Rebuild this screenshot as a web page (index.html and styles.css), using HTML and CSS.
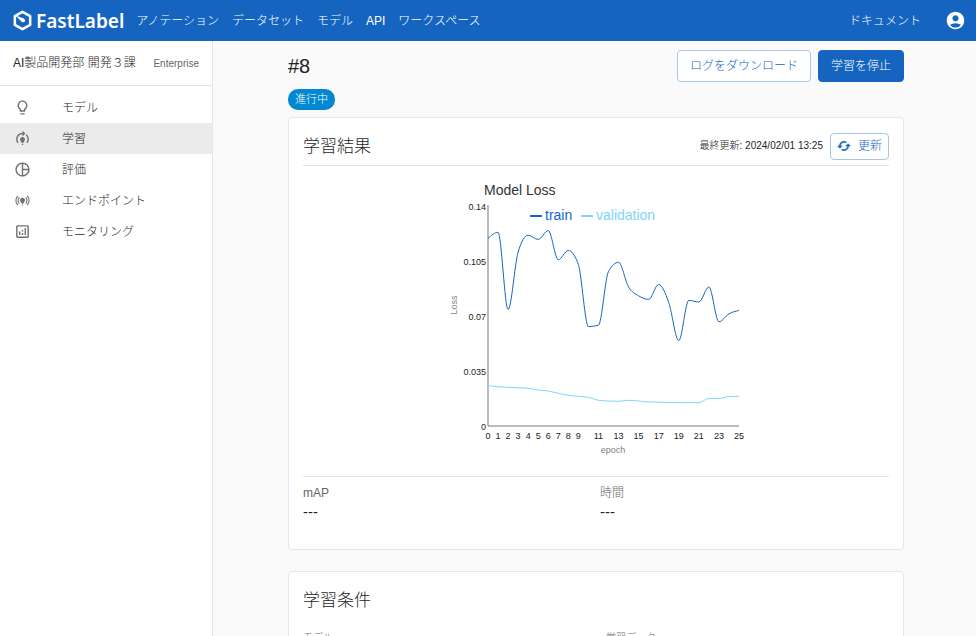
FILE: index.html
```html
<!DOCTYPE html>
<html lang="ja">
<head>
<meta charset="utf-8">
<meta name="viewport" content="width=device-width, initial-scale=1">
<title>FastLabel</title>
<link rel="stylesheet" href="styles.css">
</head>
<body>
<header class="topbar">
  <a class="brand" href="#">
    <svg class="brand-mark" viewBox="0 0 20 20" aria-hidden="true">
      <path class="brand-hex" d="M10 1.7 17.3 5.8V14.2L10 18.3 2.7 14.2V5.8Z"/>
      <path class="brand-needle" d="M3.2 5.2 10.8 7.8Q13.2 9 12.4 10.7 11.400 12.4 9.4 11.4Z"/>
    </svg>
    <span class="brand-name">FastLabel</span>
  </a>
  <nav class="topnav">
    <a href="#">アノテーション</a>
    <a href="#">データセット</a>
    <a href="#">モデル</a>
    <a href="#">API</a>
    <a href="#">ワークスペース</a>
  </nav>
  <a class="docs" href="#">ドキュメント</a>
  <button class="account" type="button" aria-label="アカウント">
    <svg viewBox="0 0 24 24" aria-hidden="true"><path d="M12 2C6.480 2 2 6.480 2 12s4.480 10 10 10 10-4.480 10-10S17.520 2 12 2zm0 4c1.930 0 3.500 1.570 3.500 3.500S13.930 13 12 13s-3.500-1.570-3.500-3.500S10.070 6 12 6zm0 14c-2.030 0-4.430-.82-6.140-2.880C7.550 15.800 9.680 15 12 15s4.450.8 6.140 2.120C16.430 19.180 14.030 20 12 20z"/></svg>
  </button>
</header>
<div class="shell">
  <aside class="sidebar">
    <div class="team"><span class="team-name">AI製品開発部 開発３課</span><span class="plan">Enterprise</span></div>
    <nav class="menu">
      <a href="#"><svg viewBox="0 0 24 24" aria-hidden="true"><path d="M9 21c0 .55.45 1 1 1h4c.55 0 1-.45 1-1v-1H9v1zm3-19C8.140 2 5 5.140 5 9c0 2.380 1.190 4.470 3 5.740V17c0 .55.45 1 1 1h6c.55 0 1-.45 1-1v-2.260c1.810-1.270 3-3.360 3-5.740 0-3.860-3.140-7-7-7zm2 11.700V16h-4v-2.300C8.480 12.630 7 11.530 7 9c0-2.760 2.240-5 5-5s5 2.240 5 5c0 2.490-1.510 3.650-3 4.700z"/></svg>モデル</a>
      <a class="current" href="#" aria-current="page"><svg viewBox="0 0 24 24" aria-hidden="true"><path d="M15.500 13.500c0 2-2.500 3.500-2.500 5h-2c0-1.500-2.500-3-2.500-5 0-1.930 1.570-3.500 3.500-3.500s3.500 1.570 3.500 3.500zm-2.500 6h-2V21h2v-1.500zm6-6.500c0 1.680-.59 3.210-1.580 4.420l1.420 1.420C20.180 17.270 21 15.230 21 13c0-2.740-1.230-5.190-3.160-6.840l-1.420 1.420C17.990 8.860 19 10.820 19 13zm-3-8-4-4v3c-4.970 0-9 4.030-9 9 0 2.230.82 4.270 2.160 5.840l1.420-1.420C5.590 16.210 5 14.680 5 13c0-3.860 3.140-7 7-7v3l4-4z"/></svg>学習</a>
      <a href="#"><svg viewBox="0 0 24 24" aria-hidden="true"><path d="M12 2C6.480 2 2 6.480 2 12s4.480 10 10 10 10-4.480 10-10S17.520 2 12 2zm1 2.070c3.610.45 6.480 3.330 6.930 6.930H13V4.070zM4 12c0-4.060 3.070-7.440 7-7.930v15.870c-3.930-.5-7-3.880-7-7.940zm9 7.930V13h6.930c-.45 3.610-3.320 6.480-6.930 6.930z"/></svg>評価</a>
      <a href="#"><svg viewBox="0 0 24 24" aria-hidden="true"><path d="M15.500 11.500c0 2-2.500 3.500-2.500 5h-2c0-1.500-2.500-3-2.500-5C8.500 9.570 10.070 8 12 8s3.500 1.570 3.500 3.500zm-2.500 6h-2V19h2v-1.500zm9-5.500c0-2.760-1.120-5.260-2.930-7.070l-1.060 1.060C19.550 7.530 20.500 9.660 20.500 12c0 2.340-.95 4.470-2.490 6.010l1.060 1.060C20.880 17.260 22 14.760 22 12zM3.500 12c0-2.340.95-4.470 2.490-6.010L4.930 4.930C3.120 6.740 2 9.240 2 12c0 2.760 1.120 5.260 2.930 7.070l1.060-1.060C4.450 16.470 3.500 14.340 3.500 12zm14 0c0 1.520-.62 2.890-1.610 3.890l1.060 1.060C18.220 15.680 19 13.930 19 12c0-1.930-.78-3.680-2.050-4.950l-1.060 1.060C16.880 9.110 17.500 10.480 17.500 12zM7.050 16.950l1.060-1.060C7.120 14.890 6.500 13.520 6.500 12c0-1.520.62-2.890 1.610-3.890L7.050 7.050C5.780 8.320 5 10.070 5 12c0 1.930.78 3.680 2.050 4.950z"/></svg>エンドポイント</a>
      <a href="#"><svg viewBox="0 0 24 24" aria-hidden="true"><path d="M19 3H5c-1.100 0-2 .9-2 2v14c0 1.100.9 2 2 2h14c1.100 0 2-.9 2-2V5c0-1.100-.9-2-2-2zm0 16H5V5h14v14zM7 12h2v5H7zM15 7h2v10h-2zM11 14h2v3h-2zM11 10h2v2h-2z"/></svg>モニタリング</a>
    </nav>
  </aside>
  <main class="main">
    <div class="page-head">
      <h1>#8</h1>
      <button class="btn btn-outline" type="button">ログをダウンロード</button>
      <button class="btn btn-solid" type="button">学習を停止</button>
    </div>
    <span class="chip">進行中</span>
    <section class="card">
      <div class="card-head">
        <h2>学習結果</h2>
        <span class="updated">最終更新: 2024/02/01 13:25</span>
        <button class="btn btn-outline btn-refresh" type="button">
          <svg viewBox="0 0 24 24" aria-hidden="true"><path d="m19 8-4 4h3c0 3.310-2.690 6-6 6-1.010 0-1.970-.25-2.800-.7l-1.460 1.460C8.970 19.540 10.430 20 12 20c4.420 0 8-3.580 8-8h3l-4-4zM6 12c0-3.310 2.690-6 6-6 1.010 0 1.970.25 2.800.7l1.460-1.460C15.030 4.460 13.570 4 12 4c-4.420 0-8 3.580-8 8H1l4 4 4-4H6z"/></svg>更新
        </button>
      </div>
      <div class="chart-area">
        <svg class="chart" id="loss-chart" width="296" height="290" viewBox="0 0 296 290" role="img" aria-label="Model Loss">
          <text class="chart-title" x="36" y="26">Model Loss</text>
          <path class="key train" d="M82 47H94"/>
          <text class="legend train-text" x="97" y="51">train</text>
          <path class="key validation" d="M133 47H145"/>
          <text class="legend validation-text" x="148" y="51">validation</text>
          <g id="ticks"></g>
          <path class="axis" d="M40 36V257H291"/>
          <path class="line validation" id="validation-line"/>
          <path class="line train" id="train-line"/>
          <text class="axis-label" x="165" y="284" text-anchor="middle">epoch</text>
          <text class="axis-label" transform="translate(9 136) rotate(-90)" text-anchor="middle">Loss</text>
        </svg>
      </div>
      <dl class="facts">
        <div><dt>mAP</dt><dd>---</dd></div>
        <div><dt>時間</dt><dd>---</dd></div>
      </dl>
    </section>
    <section class="card">
      <h2>学習条件</h2>
      <dl class="conditions">
        <div><dt>モデル</dt></div>
        <div><dt>学習データ</dt></div>
      </dl>
    </section>
  </main>
</div>
<script src="chart.js"></script>
</body>
</html>
```
FILE: styles.css
```css
* { box-sizing: border-box; }

body {
  margin: 0;
  height: 100vh;
  display: flex;
  flex-direction: column;
  overflow: hidden;
  background: #fafafa;
  color: #262626;
  font: 300 12px/18px "Liberation Sans", "Noto Sans CJK JP", sans-serif;
}

a { color: inherit; text-decoration: none; }
svg { display: block; fill: currentColor; }
h1, h2, dl, dd { margin: 0; font-weight: 300; }
button { font: inherit; cursor: pointer; }

.topbar {
  flex: none;
  display: flex;
  align-items: center;
  height: 41px;
  padding: 0 10px 0 12px;
  background: #1565c0;
  color: #fff;
}
.brand { display: flex; align-items: center; gap: 3px; }
.brand-mark { width: 21px; height: 21px; }
.brand-hex { fill: none; stroke: #fff; stroke-width: 2.4; stroke-linejoin: round; }
.brand-needle { fill: #fff; }
.brand-name { font: 600 19px/24px "Noto Sans", sans-serif; }
.topnav { display: flex; gap: 13px; margin-left: 12px; white-space: nowrap; }
.docs { margin-left: auto; }
.account {
  margin-left: 24px;
  padding: 0;
  border: 0;
  background: none;
  color: #fff;
}
.account svg { width: 21px; height: 21px; }

.shell { flex: 1; display: flex; min-height: 0; }

.sidebar {
  flex: none;
  width: 213px;
  background: #fff;
  border-right: 1px solid #e6e6e6;
}
.team {
  display: flex;
  align-items: center;
  justify-content: space-between;
  height: 45px;
  padding: 0 13px;
  border-bottom: 1px solid #e2e2e2;
  white-space: nowrap;
}
.plan { padding-top: 2px; font-size: 10px; color: #666; }
.menu { padding-top: 6px; }
.menu a {
  display: flex;
  align-items: center;
  gap: 31px;
  height: 31px;
  padding-left: 14px;
}
.menu svg { width: 17px; height: 17px; color: #707070; }
.menu .current { background: #ebebeb; }

.main {
  flex: 1;
  min-width: 0;
  overflow-y: auto;
  scrollbar-width: none;
  padding: 9px 72px 24px 75px;
}
.page-head { display: flex; align-items: center; gap: 7px; }
h1 { flex: 1; font-size: 20px; line-height: 28px; color: #222; }

.btn {
  display: flex;
  align-items: center;
  justify-content: center;
  height: 32px;
  padding: 0 12px;
  border: 1px solid #1565c0;
  border-radius: 4px;
  line-height: 18px;
}
.btn-outline { background: #fff; border-color: #a9c6e8; color: #1565c0; }
.btn-solid { background: #1565c0; color: #fff; }
.btn-refresh { height: 27px; gap: 7px; padding: 0 6px; }
.btn-refresh svg { width: 14px; height: 14px; stroke: currentColor; stroke-width: 1; }

.chip {
  display: block;
  width: fit-content;
  margin-top: 7px;
  padding: 0 7px;
  border-radius: 10px;
  background: #0288d1;
  color: #fff;
  font-size: 11px;
  line-height: 21px;
}

.card {
  margin-top: 7px;
  padding: 13px 14px 28px;
  background: #fff;
  border: 1px solid #e6e6e6;
  border-radius: 4px;
}
.card + .card { margin-top: 21px; }
h2 { padding-top: 2px; font-size: 17px; line-height: 28px; }
.card-head {
  display: flex;
  align-items: center;
  gap: 7px;
  padding-bottom: 4px;
  border-bottom: 1px solid #e2e2e2;
}
.card-head h2 { flex: 1; }
.updated { font-size: 10px; }

.chart-area {
  display: flex;
  justify-content: center;
  padding: 3px 0 17px;
  border-bottom: 1px solid #e2e2e2;
}
.chart { font-family: "Liberation Sans", sans-serif; }
.chart-title { font-size: 14px; fill: #333; }
.legend { font-size: 14px; }
.train-text { fill: #1565c0; }
.validation-text { fill: #81d4fa; }
.key, .line, .axis { fill: none; }
.key { stroke-width: 2; }
.line { stroke-width: 1; }
.train { stroke: #1565c0; }
.validation { stroke: #81d4fa; }
.axis { stroke: #777; stroke-width: 1; }
.tick { font-size: 9px; fill: #222; }
.axis-label { font-size: 9px; fill: #808080; }

.facts, .conditions { display: grid; grid-template-columns: 1fr 1fr; }
.facts { gap: 8px; padding-top: 7px; }
.conditions { gap: 20px; padding-top: 14px; font-size: 10px; }
dt { color: #666; }
dd { font-size: 15px; line-height: 19px; color: #222; }
```
FILE: chart.js
```js
// Vertical positions inside the chart for epochs 0 to 25.
const train = [69.5, 63.3, 140.5, 83, 66.2, 70.4, 61.6, 90.8, 81.4, 95.5, 157.6, 156.2, 102.5,
  93.3, 118, 126.8, 130.4, 115.4, 133.5, 171.6, 131.4, 133, 118, 152.8, 144.8, 141.5];
const validation = [216.7, 217.7, 218.3, 218.8, 219.3, 221, 222, 224.3, 226.3, 227.3, 228.3, 231.3, 232,
  232.3, 231.3, 232, 233, 233.1, 233.5, 233.7, 233.7, 233.7, 229.4, 229.4, 227.6, 227.3];

const left = 40;
const step = 10.04;

// Monotone cubic curve through evenly spaced points.
function curve(ys) {
  const n = ys.length;
  const d = ys.slice(1).map((y, i) => y - ys[i]);
  const m = ys.map((_, i) => {
    if (i === 0 || i === n - 1) return 0;
    const a = d[i - 1], b = d[i];
    return (Math.sign(a) + Math.sign(b)) * Math.min(Math.abs(a), Math.abs(b), Math.abs(a + b) / 4);
  });
  m[0] = (3 * d[0] - m[1]) / 2;
  m[n - 1] = (3 * d[n - 2] - m[n - 2]) / 2;
  let path = `M${left} ${ys[0]}`;
  for (let i = 0; i < n - 1; i++) {
    const x = left + i * step;
    path += `C${x + step / 3} ${ys[i] + m[i] / 3} ${x + step * 2 / 3} ${ys[i + 1] - m[i + 1] / 3} ${x + step} ${ys[i + 1]}`;
  }
  return path;
}

document.getElementById("train-line").setAttribute("d", curve(train));
document.getElementById("validation-line").setAttribute("d", curve(validation));

const ticks = document.getElementById("ticks");
function tick(label, x, y, anchor) {
  const t = document.createElementNS("http://www.w3.org/2000/svg", "text");
  t.setAttribute("class", "tick");
  t.setAttribute("x", x);
  t.setAttribute("y", y);
  t.setAttribute("text-anchor", anchor);
  t.textContent = label;
  ticks.append(t);
}
["0.14", "0.105", "0.07", "0.035", "0"].forEach((v, i) => tick(v, 38, 41 + i * 55, "end"));
[0, 1, 2, 3, 4, 5, 6, 7, 8, 9, 11, 13, 15, 17, 19, 21, 23, 25]
  .forEach((v) => tick(v, left + v * step, 270, "middle"));
```
